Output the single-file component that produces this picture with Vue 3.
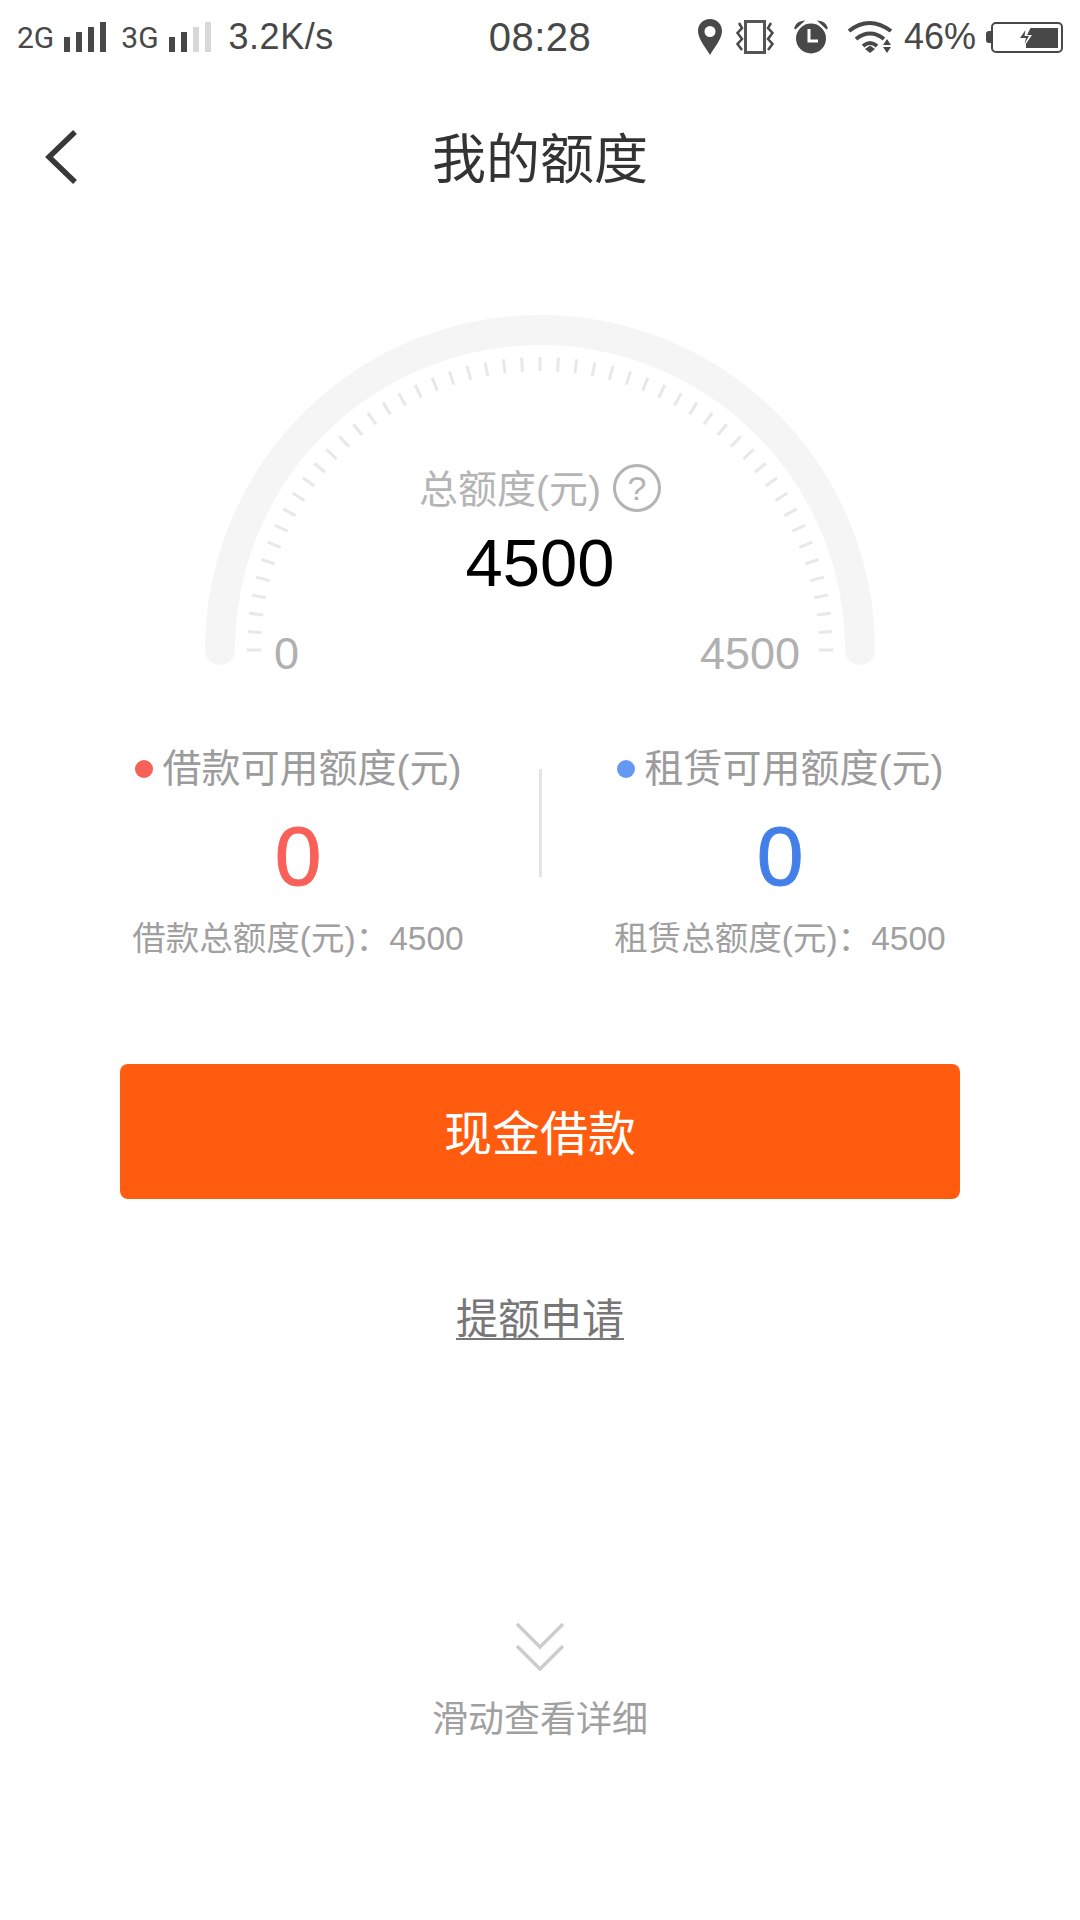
<template>
  <div class="page">
    <div class="status-bar">
      <div class="status-side">
        <span class="net">2G</span>
        <span class="signal">
          <i v-for="(h, n) in barHeights" :key="n" :style="{ height: h + 'px' }"></i>
        </span>
        <span class="net net-second">3G</span>
        <span class="signal">
          <i v-for="(h, n) in barHeights" :key="n" :class="{ off: n > 1 }" :style="{ height: h + 'px' }"></i>
        </span>
        <span class="speed">3.2K/s</span>
      </div>
      <span class="clock">08:28</span>
      <div class="status-side status-right">
        <svg class="ic-pin" width="24" height="36" viewBox="0 0 24 36">
          <path fill="#484848" fill-rule="evenodd" d="M12 0C5 0 0 5.300 0 12c0 7.500 7 15.500 12 24 5-8.500 12-16.500 12-24C24 5.300 19 0 12 0zm0 7a5.500 5.500 0 1 1 0 11 5.500 5.500 0 0 1 0-11z" />
        </svg>
        <svg class="ic-vib" width="38" height="34" viewBox="0 0 38 34">
          <rect x="9.500" y="1.500" width="19" height="31" fill="none" stroke="#555" stroke-width="3" />
          <path d="M3 3 L6 8 L1.500 13 L6 19 L1.500 24 L6 30 M35 3 L32 8 L36.500 13 L32 19 L36.500 24 L32 30" fill="none" stroke="#484848" stroke-width="2.500" />
        </svg>
        <svg class="ic-alarm" width="34" height="34" viewBox="0 0 34 34">
          <circle cx="17" cy="18.500" r="15" fill="#484848" />
          <path d="M15 9 V21 H24" fill="none" stroke="#fff" stroke-width="3" />
          <path d="M1 8 Q3 2 9 1.500 L1.500 8.500z M33 8 Q31 2 25 1.500 L32.500 8.500z" fill="#484848" stroke="#484848" stroke-width="1.500" />
        </svg>
        <svg class="ic-wifi" width="47" height="34" viewBox="0 0 47 34">
          <path d="M2 11 Q22 -5 44 11 M9 19 Q23 8 37 19 M16 26 Q23 20 30 26" fill="none" stroke="#484848" stroke-width="4" />
          <path d="M18 29 L23 25.500 L28 29 L23 33z" fill="#484848" />
          <path d="M40 19 L44 25 H36z M36 27 H44 L40 33z" fill="#484848" />
        </svg>
        <span class="percent">46%</span>
        <span class="battery-tip"></span>
        <svg class="ic-batt" width="72" height="31" viewBox="0 0 72 31">
          <rect x="1" y="1" width="70" height="29" rx="4" fill="none" stroke="#484848" stroke-width="2" />
          <path d="M35 6 H67 V26 H35z" fill="#484848" />
          <path d="M36 5 L28 16 H34 L32 26 L41 13 H36 L40 5z" fill="#fff" />
          <path d="M34.500 8 L29 16 H35 L33.500 22 L38 14 H33.500z" fill="#484848" />
        </svg>
      </div>
    </div>

    <header class="nav">
      <svg class="back" width="34" height="54" viewBox="0 0 34 54">
        <path d="M30 2 L4 27 L30 52" fill="none" stroke="#383838" stroke-width="5.500" />
      </svg>
      <h1>我的额度</h1>
    </header>

    <section class="gauge">
      <svg class="dial" width="700" height="380" viewBox="190 300 700 380">
        <path d="M220 650 A320 320 0 0 1 860 650" fill="none" stroke="#f5f5f5" stroke-width="30" stroke-linecap="round" />
        <line
          v-for="t in ticks"
          :key="t.id"
          :x1="t.x1"
          :y1="t.y1"
          :x2="t.x2"
          :y2="t.y2"
          stroke="#e8e8e8"
          stroke-width="3"
        />
      </svg>
      <div class="gauge-title">
        <span class="gauge-name">总额度(元)</span>
        <span class="help">?</span>
      </div>
      <div class="gauge-value">4500</div>
      <div class="gauge-scale">
        <span>0</span>
        <span>4500</span>
      </div>
    </section>

    <section class="stats">
      <div v-for="s in stats" :key="s.label" class="stat">
        <div class="stat-label">
          <i class="dot" :style="{ background: s.dot }"></i>{{ s.label }}
        </div>
        <div class="stat-value" :style="{ color: s.color }">0</div>
        <div class="stat-total">{{ s.total }}<span class="colon">：</span>4500</div>
      </div>
      <div class="divider"></div>
    </section>

    <button class="cash-btn">现金借款</button>
    <a class="raise-link">提额申请</a>

    <div class="more">
      <svg width="50" height="50" viewBox="0 0 50 50">
        <path d="M2 2 L25 25 L48 2 M2 24 L25 47 L48 24" fill="none" stroke="#cdcdcd" stroke-width="3.500" />
      </svg>
      <span>滑动查看详细</span>
    </div>
  </div>
</template>

<script setup>
const barHeights = [15, 20, 25, 30]

// 51 tick marks, one every 3.6 degrees along the dial
const ticks = Array.from({ length: 51 }, (_, id) => {
  const a = (Math.PI * id) / 50
  const cos = Math.cos(a)
  const sin = Math.sin(a)
  return {
    id,
    x1: 540 - 293 * cos,
    y1: 650 - 293 * sin,
    x2: 540 - 279 * cos,
    y2: 650 - 279 * sin
  }
})

const stats = [
  { label: '借款可用额度(元)', total: '借款总额度(元)', dot: '#f8605a', color: '#f8605a' },
  { label: '租赁可用额度(元)', total: '租赁总额度(元)', dot: '#6598f2', color: '#437fe8' }
]
</script>

<style>
html,
body {
  background: #fff;
}
</style>

<style scoped>
.page {
  position: relative;
  width: 1080px;
  height: 1920px;
  background: #fff;
  font-family: "Liberation Sans", "Noto Sans CJK SC", sans-serif;
  display: flex;
  flex-direction: column;
  align-items: center;
  overflow: hidden;
}

.status-bar {
  width: 100%;
  height: 74px;
  box-sizing: border-box;
  padding: 0 17px;
  display: grid;
  grid-template-columns: 1fr auto 1fr;
  align-items: center;
  color: #484848;
}

.status-side {
  display: flex;
  align-items: center;
}

.status-right {
  justify-content: flex-end;
}

.net {
  font-family: Roboto, sans-serif;
  font-size: 30px;
}

.net-second {
  margin-left: 15px;
}

.signal {
  display: flex;
  align-items: flex-end;
  gap: 6px;
  height: 30px;
  margin-left: 10px;
}

.signal i {
  display: block;
  width: 6px;
  background: #484848;
}

.signal i.off {
  background: #d8d8d8;
}

.speed {
  font-size: 36px;
  margin-left: 18px;
  letter-spacing: 0.5px;
}

.clock {
  font-size: 40px;
  letter-spacing: 0.5px;
}

.ic-vib {
  margin-left: 14px;
}

.ic-alarm {
  margin-left: 20px;
}

.ic-wifi {
  margin-left: 19px;
}

.percent {
  font-size: 36px;
  margin-left: 10px;
}

.battery-tip {
  width: 5px;
  height: 12px;
  margin-left: 10px;
  background: #484848;
  border-radius: 3px 0 0 3px;
}

.nav {
  position: relative;
  width: 100%;
  height: 166px;
  display: flex;
  align-items: center;
  justify-content: center;
}

.nav h1 {
  margin: 0 0 4px;
  font-size: 54px;
  font-weight: 400;
  color: #333;
}

.back {
  position: absolute;
  left: 45px;
  top: 56px;
}

.gauge {
  position: relative;
  width: 700px;
  height: 380px;
  margin-top: 60px;
  display: flex;
  flex-direction: column;
  align-items: center;
  box-sizing: border-box;
  padding-top: 164px;
}

.dial {
  position: absolute;
  left: 0;
  top: 0;
}

.gauge-title {
  position: relative;
  display: flex;
  align-items: center;
  gap: 12px;
  font-size: 39px;
  color: #b4b4b4;
  height: 48px;
}

.gauge-name {
  margin-bottom: 4px;
}

.help {
  width: 48px;
  height: 48px;
  box-sizing: border-box;
  border: 3px solid #b4b4b4;
  border-radius: 50%;
  display: flex;
  align-items: center;
  justify-content: center;
  font-size: 34px;
}

.gauge-value {
  position: relative;
  font-size: 67px;
  line-height: 74px;
  margin-top: 14px;
  color: #000;
}

.gauge-scale {
  position: relative;
  align-self: stretch;
  display: flex;
  justify-content: space-between;
  padding: 0 90px 0 84px;
  margin-top: 29px;
  font-size: 45px;
  line-height: 50px;
  color: #b0b0b0;
}

.stats {
  position: relative;
  width: 964px;
  margin: 64px 2px 0 0;
  display: grid;
  grid-template-columns: 1fr 1fr;
  justify-items: center;
}

.stat {
  display: flex;
  flex-direction: column;
  align-items: center;
}

.stat-label {
  display: flex;
  align-items: center;
  font-size: 39px;
  line-height: 50px;
  color: #9c9c9c;
}

.dot {
  width: 18px;
  height: 18px;
  border-radius: 50%;
  margin-right: 10px;
}

.stat-value {
  font-size: 84px;
  line-height: 96px;
  margin-top: 14px;
  -webkit-text-stroke: 1px currentColor;
}

.stat-total {
  font-size: 33.500px;
  line-height: 44px;
  margin-top: 13px;
  color: #a0a0a0;
  white-space: nowrap;
}

.divider {
  position: absolute;
  left: 482px;
  top: 25px;
  width: 3px;
  height: 108px;
  background: #e4e4e4;
}

.cash-btn {
  width: 840px;
  height: 135px;
  margin-top: 103px;
  padding: 0 0 4px;
  border: none;
  border-radius: 8px;
  background: #ff5c10;
  color: #fff;
  font-family: inherit;
  font-size: 48px;
}

.raise-link {
  margin-top: 96px;
  font-size: 42px;
  line-height: 50px;
  color: #777;
  text-decoration: underline;
  text-underline-offset: 4px;
  text-decoration-thickness: 2px;
}

.more {
  margin-top: 277px;
  display: flex;
  flex-direction: column;
  align-items: center;
  gap: 18px;
  font-size: 36px;
  color: #a0a0a0;
}
</style>
